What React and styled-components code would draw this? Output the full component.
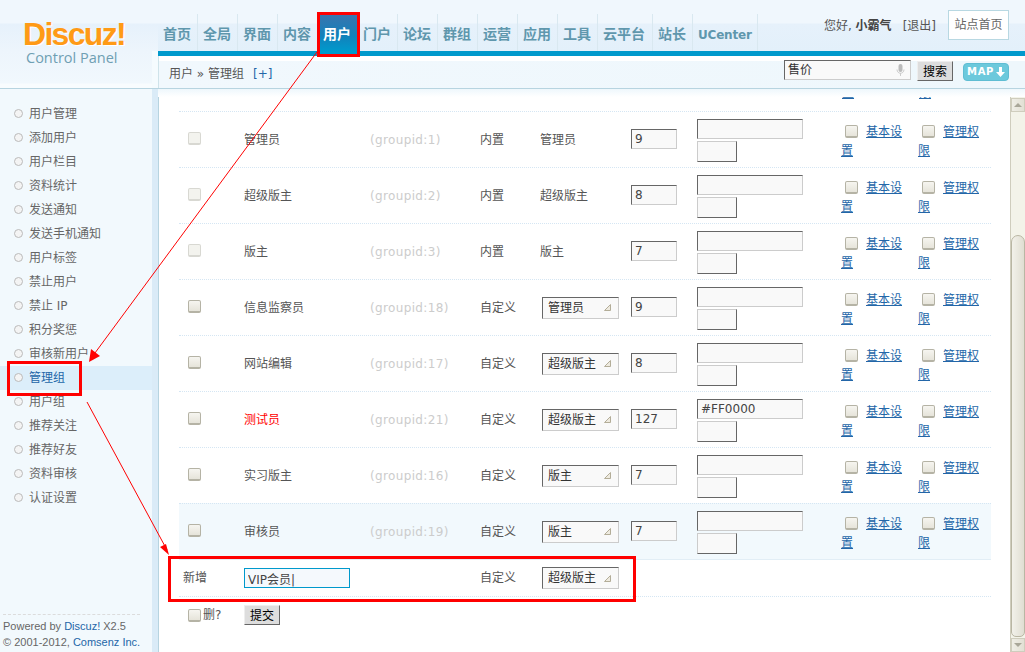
import React from "react";
import styled, { createGlobalStyle } from "styled-components";

const Global = createGlobalStyle`
  html, body { margin: 0; padding: 0; background: #fff; }
  * { box-sizing: border-box; }
  body { font: 12px/1.5 "DejaVu Sans", "Noto Sans CJK SC", sans-serif; color: #555; }
`;

const Page = styled.div`
  position: relative;
  width: 1025px;
  height: 652px;
  overflow: hidden;
  display: grid;
  grid-template-columns: 158px 1fr;
  grid-template-rows: 89px 1fr;
`;

/* left column */
const LogoBox = styled.div`
  background:
    linear-gradient(#f5fbfe, #f5fbfe) right bottom / 6px 37px no-repeat,
    linear-gradient(#f0f7fd 0, #f0f7fd 23px, #e6f1fb 24px, #edf5fc 51px, #f1f8fd 83px, #f8fcfe 84px);
  border-bottom: 1px solid #b7d4e0;
  padding: 19px 0 0 23px;
`;
const LogoWord = styled.div`
  font: bold 32px/30px "Liberation Sans", sans-serif;
  color: #ff9a16;
  letter-spacing: -1.7px;
  text-shadow: 1px 1px 0 #fff;
`;
const LogoSub = styled.div`
  font: 14.5px/18px "Open Sans", sans-serif;
  color: #6f9fb3;
  margin: 0 0 0 3px;
`;
const Side = styled.div`
  display: flex;
  flex-direction: column;
  background: #f2f9fd;
  border-right: 6px solid #daebf7;
  box-shadow: 1px 0 0 #b7d4e0;
  padding-top: 13px;
  height: 563px;
`;
const SideItem = styled.div`
  height: 24px;
  display: flex;
  align-items: center;
  padding-left: 14px;
  color: ${(p) => (p.$on ? "#2366a8" : "#666")};
  background: ${(p) => (p.$on ? "#dceefa" : "transparent")};
  &::before {
    content: "";
    width: 7px;
    height: 7px;
    border-radius: 50%;
    border: 1px solid #bbb;
    background: #f4f4f4;
    margin-right: 6px;
    margin-top: -2px;
  }
`;
const SideFoot = styled.div`
  margin: auto 12px 0 3px;
  border-top: 1px dashed #dcdcdc;
  font: 11px/16px "Liberation Sans", sans-serif;
  padding: 3px 0 2px;
  white-space: nowrap;
  color: #666;
  a { color: #2366a8; text-decoration: none; }
`;

/* right column */
const Head = styled.div`
  display: flex;
  flex-direction: column;
  background: #fff;
  border-bottom: 1px solid #b7d4e0;
`;
const NavBar = styled.div`
  height: 51px;
  display: flex;
  align-items: flex-end;
  background: linear-gradient(#f0f7fd 0, #f0f7fd 23px, #e6f1fb 24px, #e3f0fa 51px);
`;
const Nav = styled.div`
  display: flex;
  height: 37px;
  flex: 1;
`;
const NavItem = styled.div`
  height: 37px;
  padding: ${(p) => (p.$latin ? "6px" : "4px")} 0 0 5px;
  border-right: 1px solid ${(p) => (p.$on ? "transparent" : "#d9e8f0")};
  width: ${(p) => p.$w || 40}px;
  font-weight: bold;
  line-height: 30px;
  white-space: nowrap;
  color: ${(p) => (p.$on ? "#fff" : "#5f97ad")};
  background: ${(p) => (p.$on ? "linear-gradient(#3a74ae, #1282bb 60%, #0099cc)" : "none")};
  font-family: ${(p) => (p.$latin ? '"DejaVu Sans"' : '"Noto Sans CJK SC"')}, sans-serif;
  font-size: ${(p) => (p.$latin ? "12px" : "14px")};
  letter-spacing: ${(p) => (p.$latin ? "-0.2px" : "0")};
`;
const User = styled.div`
  display: flex;
  align-items: center;
  gap: 11px;
  height: 30px;
  margin: 0 16px 11px 0;
  color: #555;
  white-space: nowrap;
  b { color: #444; }
  span { margin-top: 2px; }
`;
const Logout = styled.span`
  margin-right: 1px;
`;
const HomeBtn = styled.div`
  width: 61px;
  height: 30px;
  background: #fff;
  border: 1px solid #b8d8e2;
  text-align: center;
  line-height: 28px;
  color: #666;
`;
const Stripe = styled.div`
  height: 5px;
  background: #0099cc;
`;
const CrumbWrap = styled.div`
  flex: 1;
  padding-top: 5px;
  border-left: 1px solid #cfe3ea;
  background: #fff;
`;
const Crumb = styled.div`
  height: 27px;
  background: linear-gradient(90deg, #f1f8fd, #eef7fc);
  display: flex;
  align-items: center;
  padding: 0 16px 2px 10px;
  color: #555;
`;
const CrumbAdd = styled.span`
  color: #2366a8;
  margin-left: 9px;
`;
const Search = styled.div`
  margin-left: auto;
  align-self: flex-start;
  margin-top: -1px;
  display: flex;
  align-items: flex-start;
`;
const SearchBox = styled.div`
  width: 127px;
  height: 20px;
  background: #f9f9f9;
  border: 1px solid;
  border-color: #666 #ccc #ccc #666;
  padding: 0 5px 0 3px;
  display: flex;
  align-items: center;
  justify-content: space-between;
  color: #333;
`;
const Btn = styled.button`
  width: ${(p) => p.$w}px;
  height: 20px;
  padding: 0;
  margin: 0;
  background: #ddd;
  border: 1px solid;
  border-color: #eee #666 #666 #eee;
  font: 12px/18px "Noto Sans CJK SC", sans-serif;
  color: #000;
`;
const SearchBtn = styled(Btn)`
  margin: 1px 0 0 6px;
`;
const MapBtn = styled.div`
  margin: 3px 0 0 10px;
  width: 46px;
  height: 18px;
  border-radius: 4px;
  border: 1px solid #5fbdd3;
  background: #6cc9dc;
  color: #fff;
  font: bold 10px/16px "DejaVu Sans", sans-serif;
  letter-spacing: 0.6px;
  display: flex;
  align-items: center;
  justify-content: center;
  gap: 2px;
`;

/* content */
const Main = styled.div`
  display: flex;
  flex-direction: column;
  min-height: 0;
  overflow: hidden;
`;
const Shade = styled.div`
  height: 8px;
  flex: none;
  background: linear-gradient(#eef7fc, #fff);
`;
const Body = styled.div`
  flex: 1;
  min-height: 0;
  display: flex;
`;
const Pane = styled.div`
  flex: 1;
  min-width: 0;
  overflow: hidden;
  padding: 0 19px 0 21px;
`;
const Clipped = styled.div`
  height: 4px;
  overflow: hidden;
  display: flex;
  justify-content: flex-end;
  margin-bottom: 10px;
`;
const ClipCell = styled.div`
  width: ${(p) => p.$w}px;
  height: 4px;
  padding-left: 4px;
  overflow: hidden;
  line-height: 19px;
  display: flex;
  flex-direction: column;
  justify-content: flex-end;
  a { display: block; margin-bottom: -2px; color: #2366a8; text-decoration: underline; }
`;
const Cols = "65px 126px 110px 60px 91px 66px 140px 77px 76px";
const Row = styled.div`
  display: grid;
  grid-template-columns: ${Cols};
  height: 56px;
  align-items: center;
  border-top: 1px dotted #d5e6f3;
  background: ${(p) => (p.$hot ? "#f2f9fd" : "transparent")};
`;
const AddRow = styled(Row)`
  height: 38px;
  border-bottom: 1px dotted #d5e6f3;
  border-top: 1px solid #e2eef6;
`;
const AddLabel = styled.div`
  padding-left: 4px;
`;
const Check = styled.input.attrs({ type: "checkbox", readOnly: true })`
  appearance: none;
  display: inline-block;
  width: 13px;
  height: 13px;
  margin: 0;
  border-radius: 2px;
  vertical-align: -2px;
  border: 1px solid ${(p) => (p.disabled ? "#d8d8d2" : "#b5b3a5")};
  border-bottom-width: 2px;
  background: ${(p) => (p.disabled ? "#f3f3ee" : "linear-gradient(#f6f5f0, #e6e4da)")};
`;
const CheckCell = styled.div`
  padding-left: 9px;
  line-height: 13px;
  height: 13px;
  margin-top: -3px;
`;
const Name = styled.div`
  color: ${(p) => p.$c || "#555"};
`;
const GroupId = styled.div`
  color: #ccc;
  letter-spacing: 0.35px;
`;
const Choice = styled.div`
  width: 77px;
  height: 22px;
  margin-left: 2px;
  border: 1px solid;
  border-color: #666 #ccc #ccc #666;
  background: #f9f9f9;
  padding: 0 7px 0 5px;
  display: flex;
  align-items: center;
  justify-content: space-between;
  white-space: nowrap;
  color: #333;
`;
const Field = styled.input.attrs({ readOnly: true })`
  display: block;
  width: ${(p) => p.$w}px;
  height: 20px;
  padding: 0 0 0 3px;
  margin: 0;
  border: 1px solid;
  border-color: #666 #ccc #ccc #666;
  background: #f9f9f9;
  color: #444;
  font: 12px "DejaVu Sans", "Noto Sans CJK SC", sans-serif;
  outline: none;
`;
const StarsField = styled(Field)`
  margin-top: -1px;
`;
const ColorCell = styled.div`
  padding-top: 2px;
`;
const Swatch = styled(Field)`
  height: 21px;
  margin-top: 2px;
  border-color: #ccc #666 #666 #ccc;
`;
const NameInput = styled(Field)`
  border: 1px solid #0099cc;
  background: #f5f9fd;
  color: #444;
  width: 106px;
`;
const LinkCell = styled.div`
  padding: 4px 4px 0;
  line-height: 19px;
  a { color: #2366a8; text-decoration: underline; }
  input { margin: 0 8px 0 4px; }
`;
const Actions = styled.div`
  display: grid;
  grid-template-columns: 65px auto;
  align-items: center;
  padding-top: 8px;
`;
const DelLabel = styled.div`
  padding-left: 9px;
  display: flex;
  align-items: center;
  gap: 2px;
`;

/* fake scrollbar */
const Bar = styled.div`
  width: 15px;
  flex: none;
  background: #f3f3e9;
  border-left: 1px solid #cfcdbd;
  padding-top: 1px;
  display: flex;
  flex-direction: column;
`;
const BarBtn = styled.div`
  height: 14px;
  flex: none;
  background: linear-gradient(90deg, #efeee6, #e2e0d4);
  border: 1px solid #cfcdbd;
  display: flex;
  align-items: center;
  justify-content: center;
  margin-top: ${(p) => (p.$down ? "1px" : "0")};
  &::before {
    content: "";
    border-left: 4px solid transparent;
    border-right: 4px solid transparent;
    ${(p) => (p.$down ? "border-top: 4px solid #a9a799;" : "border-bottom: 4px solid #a9a799;")}
  }
`;
const BarThumb = styled.div`
  height: 402px;
  margin-top: auto;
  background: linear-gradient(90deg, #f2f1ea, #e0ded2);
  border: 1px solid #b9b6a3;
  border-radius: 7px 7px 5px 5px;
`;

const Overlay = styled.svg`
  position: absolute;
  left: 0;
  top: 0;
  pointer-events: none;
`;

const sideItems = ["用户管理", "添加用户", "用户栏目", "资料统计", "发送通知", "发送手机通知", "用户标签", "禁止用户", "禁止 IP", "积分奖惩", "审核新用户", "管理组", "用户组", "推荐关注", "推荐好友", "资料审核", "认证设置"];
const navItems = [["首页"], ["全局"], ["界面"], ["内容"], ["用户", 40, 1], ["门户"], ["论坛"], ["群组"], ["运营"], ["应用"], ["工具"], ["云平台", 55], ["站长"], ["UCenter", 65]];
const rows = [
  { name: "管理员", id: 1, type: "内置", level: "管理员", stars: "9", locked: true },
  { name: "超级版主", id: 2, type: "内置", level: "超级版主", stars: "8", locked: true },
  { name: "版主", id: 3, type: "内置", level: "版主", stars: "7", locked: true },
  { name: "信息监察员", id: 18, type: "自定义", level: "管理员", stars: "9" },
  { name: "网站编辑", id: 17, type: "自定义", level: "超级版主", stars: "8" },
  { name: "测试员", id: 21, type: "自定义", level: "超级版主", stars: "127", color: "#FF0000" },
  { name: "实习版主", id: 16, type: "自定义", level: "版主", stars: "7" },
  { name: "审核员", id: 19, type: "自定义", level: "版主", stars: "7", hot: true },
];

const Tri = () => (
  <svg width="7" height="7" viewBox="0 0 7 7">
    <path d="M6.5 .5V6.5H.5Z" fill="#eeeadf" stroke="#b3ad98" />
  </svg>
);

const Mic = () => (
  <svg width="9" height="13" viewBox="0 0 9 13">
    <rect x="2.5" y="0" width="4" height="8" rx="2" fill="#bbb" />
    <path d="M1 5.5c0 5 7 5 7 0M4.5 9v3" fill="none" stroke="#ccc" />
  </svg>
);

const DownArrow = () => (
  <svg width="9" height="10" viewBox="0 0 9 10">
    <path d="M3 0H6V5H9L4.5 10L0 5H3Z" fill="#fff" />
  </svg>
);

const Select = ({ value }) => (
  <Choice>
    {value}
    <Tri />
  </Choice>
);

export default function App() {
  return (
    <Page>
      <Global />
      <LogoBox>
        <LogoWord>Discuz!</LogoWord>
        <LogoSub>Control Panel</LogoSub>
      </LogoBox>
      <Head>
        <NavBar>
          <Nav>
            {navItems.map(([label, w, on]) => (
              <NavItem key={label} $w={w} $on={on} $latin={label === "UCenter"}>{label}</NavItem>
            ))}
          </Nav>
          <User>
            <span>您好, <b>小霸气</b></span>
            <Logout>[退出]</Logout>
            <HomeBtn>站点首页</HomeBtn>
          </User>
        </NavBar>
        <Stripe />
        <CrumbWrap>
          <Crumb>
            用户 » 管理组 <CrumbAdd>[+]</CrumbAdd>
            <Search>
              <SearchBox>售价<Mic /></SearchBox>
              <SearchBtn $w={36}>搜索</SearchBtn>
              <MapBtn>MAP<DownArrow /></MapBtn>
            </Search>
          </Crumb>
        </CrumbWrap>
      </Head>
      <Side>
        {sideItems.map((s) => (
          <SideItem key={s} $on={s === "管理组"}>{s}</SideItem>
        ))}
        <SideFoot>
          Powered by <a>Discuz!</a> X2.5<br />
          © 2001-2012, <a>Comsenz Inc.</a>
        </SideFoot>
      </Side>
      <Main>
        <Shade />
        <Body>
          <Pane>
            <Clipped>
              <ClipCell $w={77}><a>置</a></ClipCell>
              <ClipCell $w={76}><a>限</a></ClipCell>
            </Clipped>
            {rows.map((r) => (
              <Row key={r.id} $hot={r.hot}>
                <CheckCell><Check disabled={r.locked} /></CheckCell>
                <Name $c={r.color ? "#f00" : undefined}>{r.name}</Name>
                <GroupId>(groupid:{r.id})</GroupId>
                <div>{r.type}</div>
                {r.locked ? <div>{r.level}</div> : <Select value={r.level} />}
                <StarsField $w={46} value={r.stars} />
                <ColorCell>
                  <Field $w={106} value={r.color || ""} />
                  <Swatch $w={40} value="" />
                </ColorCell>
                <LinkCell><Check /><a>基本设置</a></LinkCell>
                <LinkCell><Check /><a>管理权限</a></LinkCell>
              </Row>
            ))}
            <AddRow>
              <AddLabel>新增</AddLabel>
              <NameInput value="VIP会员|" />
              <div />
              <div>自定义</div>
              <Select value="超级版主" />
            </AddRow>
            <Actions>
              <DelLabel><Check />删?</DelLabel>
              <div><Btn $w={36}>提交</Btn></div>
            </Actions>
          </Pane>
          <Bar>
            <BarBtn />
            <BarThumb />
            <BarBtn $down />
          </Bar>
        </Body>
      </Main>
      <Overlay width="1025" height="652" viewBox="0 0 1025 652">
        <g fill="none" stroke="#f00" strokeWidth="3">
          <rect x="318.5" y="13.5" width="40" height="42" />
          <rect x="8.5" y="362.5" width="72" height="32" />
          <rect x="169.5" y="557.5" width="465" height="43" />
        </g>
        <g stroke="#f00" strokeWidth="1">
          <line x1="317" y1="52" x2="92" y2="357" />
          <line x1="87" y1="402" x2="167" y2="550" />
        </g>
        <path d="M89 362L91 349L100 356Z" fill="#f00" />
        <path d="M169 555L160 547L166 544Z" fill="#f00" />
      </Overlay>
    </Page>
  );
}
